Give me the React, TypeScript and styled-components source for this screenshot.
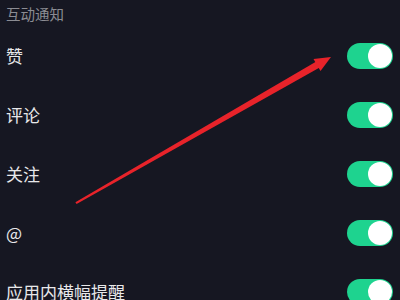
import React from "react";
import styled, { createGlobalStyle } from "styled-components";

const Global = createGlobalStyle`
  html, body { margin: 0; padding: 0; background: #161722; }
  body { width: 400px; height: 300px; overflow: hidden; }
`;

const Page = styled.div`
  position: relative;
  width: 400px;
  height: 300px;
  overflow: hidden;
  background: #161722;
  font-family: "Noto Sans CJK SC", "Noto Sans", sans-serif;
`;

const Header = styled.div`
  height: 26px;
  display: flex;
  align-items: center;
  padding-left: 6px;
  color: #8b8c93;
  font-size: 14.5px;
  letter-spacing: 0;
`;

const Row = styled.div`
  height: 59px;
  display: flex;
  align-items: center;
  justify-content: space-between;
  padding: 0 7px 0 6px;
`;

const Label = styled.span`
  color: #e8e8ea;
  font-size: 17px;
`;

const Toggle = styled.div<{ $on: boolean }>`
  width: 46px;
  height: 26px;
  border-radius: 13px;
  background: ${(p) => (p.$on ? "#1ed38f" : "#3a3b44")};
  display: flex;
  align-items: center;
  justify-content: ${(p) => (p.$on ? "flex-end" : "flex-start")};
  padding: 0 1px;
  box-sizing: border-box;
`;

const Knob = styled.div`
  width: 24px;
  height: 24px;
  border-radius: 50%;
  background: #ffffff;
`;

const Arrow = styled.svg`
  position: absolute;
  left: 0;
  top: 0;
  pointer-events: none;
`;

const items = ["赞", "评论", "关注", "@", "应用内横幅提醒"];

export default function App() {
  return (
    <Page>
      <Global />
      <Header>互动通知</Header>
      {items.map((t) => (
        <Row key={t}>
          <Label>{t}</Label>
          <Toggle $on>
            <Knob />
          </Toggle>
        </Row>
      ))}
      <Arrow width="400" height="300" viewBox="0 0 400 300">
        <polygon
          points="75.4,202.3 76.6,204.0 319.7,67.4 316.3,61.4"
          fill="#e8232a"
        />
        <polygon points="331,57 313.5,59 320.5,71" fill="#e8232a" />
      </Arrow>
    </Page>
  );
}
